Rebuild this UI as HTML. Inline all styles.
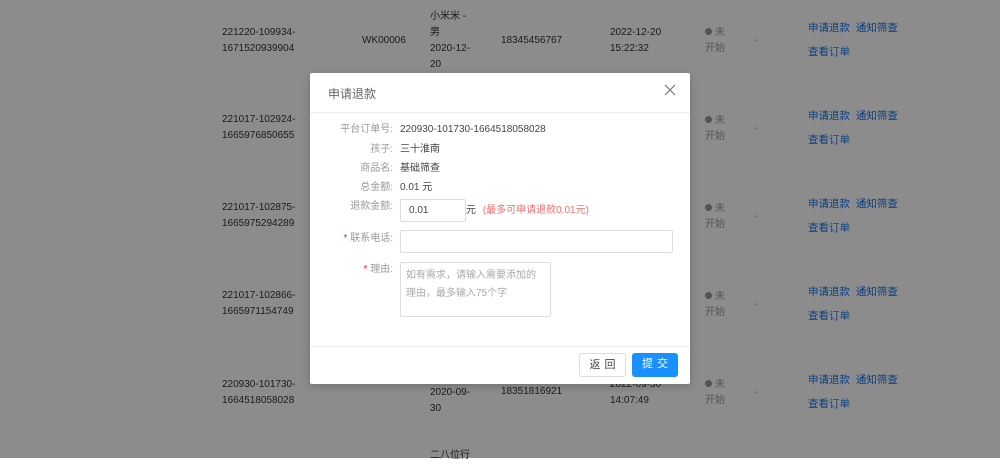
<!DOCTYPE html>
<html><head><meta charset="utf-8"><style>
*{box-sizing:border-box;margin:0;padding:0}
body{width:1000px;height:458px;overflow:hidden;background:#fff;font-family:"Liberation Sans","Noto Sans CJK SC",sans-serif;font-size:10px;color:#333;position:relative}
.a{position:absolute;line-height:16px;white-space:nowrap}
.st{color:#999}
.st i{display:inline-block;width:7px;height:7px;border-radius:50%;background:#999;margin-right:3px}
.lk{color:#1a73e8;font-size:10.5px}
.mask{position:absolute;inset:0;background:rgba(0,0,0,.45)}
.modal{position:absolute;left:310px;top:73px;width:380px;height:311px;background:#fff;border-radius:2px;box-shadow:0 2px 8px rgba(0,0,0,.2)}
.hd{height:40px;border-bottom:1px solid #eee;padding:13px 18px;font-size:12px;color:#666;line-height:16px}
.x{position:absolute;right:14px;top:11px;width:12px;height:12px}
.lb{position:absolute;right:297px;color:#999;line-height:16px;white-space:nowrap}
.v{position:absolute;left:90px;color:#444;line-height:16px;white-space:nowrap}
.in{position:absolute;border:1px solid #ddd;border-radius:2px}
.ft{position:absolute;left:0;right:0;top:273px;border-top:1px solid #eee}
.btn{position:absolute;top:280px;height:24px;border-radius:3px;font-size:11px;line-height:22px;text-align:center;letter-spacing:4px;padding-left:4px}
.r{color:#f5222d}
</style></head><body>
<div class="a" style="left:222px;top:25px">221220-109934-<br>1671520939904</div>
<div class="a" style="left:362px;top:33px">WK00006</div>
<div class="a" style="left:430px;top:9px">小米米 -<br>男<br>2020-12-<br>20</div>
<div class="a" style="left:501px;top:33px">18345456767</div>
<div class="a" style="left:610px;top:25px">2022-12-20<br>15:22:32</div>

<div class="a" style="left:222px;top:112px">221017-102924-<br>1665976850655</div>
<div class="a" style="left:222px;top:200px">221017-102875-<br>1665975294289</div>
<div class="a" style="left:222px;top:288px">221017-102866-<br>1665971154749</div>
<div class="a" style="left:222px;top:377px">220930-101730-<br>1664518058028</div>
<div class="a" style="left:430px;top:369px">- 男<br>2020-09-<br>30</div>
<div class="a" style="left:501px;top:384px">18351816921</div>
<div class="a" style="left:610px;top:377px">2022-09-30<br>14:07:49</div>
<div class="a" style="left:430px;top:448px">二八位行</div>

<div class="a st" style="left:705px;top:25px"><i></i>未<br>开始</div>
<div class="a st" style="left:705px;top:113px"><i></i>未<br>开始</div>
<div class="a st" style="left:705px;top:201px"><i></i>未<br>开始</div>
<div class="a st" style="left:705px;top:289px"><i></i>未<br>开始</div>
<div class="a st" style="left:705px;top:377px"><i></i>未<br>开始</div>
<div class="a st" style="left:755px;top:33px">-</div>
<div class="a st" style="left:755px;top:121px">-</div>
<div class="a st" style="left:755px;top:209px">-</div>
<div class="a st" style="left:755px;top:297px">-</div>
<div class="a st" style="left:755px;top:385px">-</div>

<div class="a lk" style="left:808px;top:20px">申请退款&nbsp;&nbsp;通知筛查</div><div class="a lk" style="left:808px;top:44px">查看订单</div>
<div class="a lk" style="left:808px;top:108px">申请退款&nbsp;&nbsp;通知筛查</div><div class="a lk" style="left:808px;top:132px">查看订单</div>
<div class="a lk" style="left:808px;top:196px">申请退款&nbsp;&nbsp;通知筛查</div><div class="a lk" style="left:808px;top:220px">查看订单</div>
<div class="a lk" style="left:808px;top:284px">申请退款&nbsp;&nbsp;通知筛查</div><div class="a lk" style="left:808px;top:308px">查看订单</div>
<div class="a lk" style="left:808px;top:372px">申请退款&nbsp;&nbsp;通知筛查</div><div class="a lk" style="left:808px;top:396px">查看订单</div>

<div class="mask"></div>
<div class="modal">
<div class="hd">申请退款</div>
<svg class="x" viewBox="0 0 12 12"><path d="M1 1L11 11M11 1L1 11" stroke="#777" stroke-width="1.2"/></svg>
<div class="lb" style="top:49px">平台订单号:</div><div class="v" style="top:49px">220930-101730-1664518058028</div>
<div class="lb" style="top:69px">孩子:</div><div class="v" style="top:69px">三十淮南</div>
<div class="lb" style="top:88px">商品名:</div><div class="v" style="top:88px">基础筛查</div>
<div class="lb" style="top:107px">总金额:</div><div class="v" style="top:107px">0.01 元</div>
<div class="lb" style="top:126px">退款金额:</div>
<div class="in" style="left:90px;top:126px;width:66px;height:23px;padding:4px 8px;color:#444;line-height:14px">0.01</div>
<div class="v" style="left:156px;top:130px">元 <span style="color:#f56c6c;margin-left:4px">(最多可申请退款0.01元)</span></div>
<div class="lb" style="top:158px"><span class="r">* </span>联系电话:</div>
<div class="in" style="left:90px;top:157px;width:273px;height:23px"></div>
<div class="lb" style="top:189px"><span class="r">* </span>理由:</div>
<div class="in" style="left:90px;top:189px;width:151px;height:55px;padding:4px 5px;color:#aaa;line-height:18px;white-space:normal">如有需求，请输入需要添加的理由，最多输入75个字</div>
<div class="ft"></div>
<div class="btn" style="left:269px;width:47px;border:1px solid #ddd;color:#444">返回</div>
<div class="btn" style="left:322px;width:46px;background:#1890ff;color:#fff">提交</div>
</div>
</body></html>
